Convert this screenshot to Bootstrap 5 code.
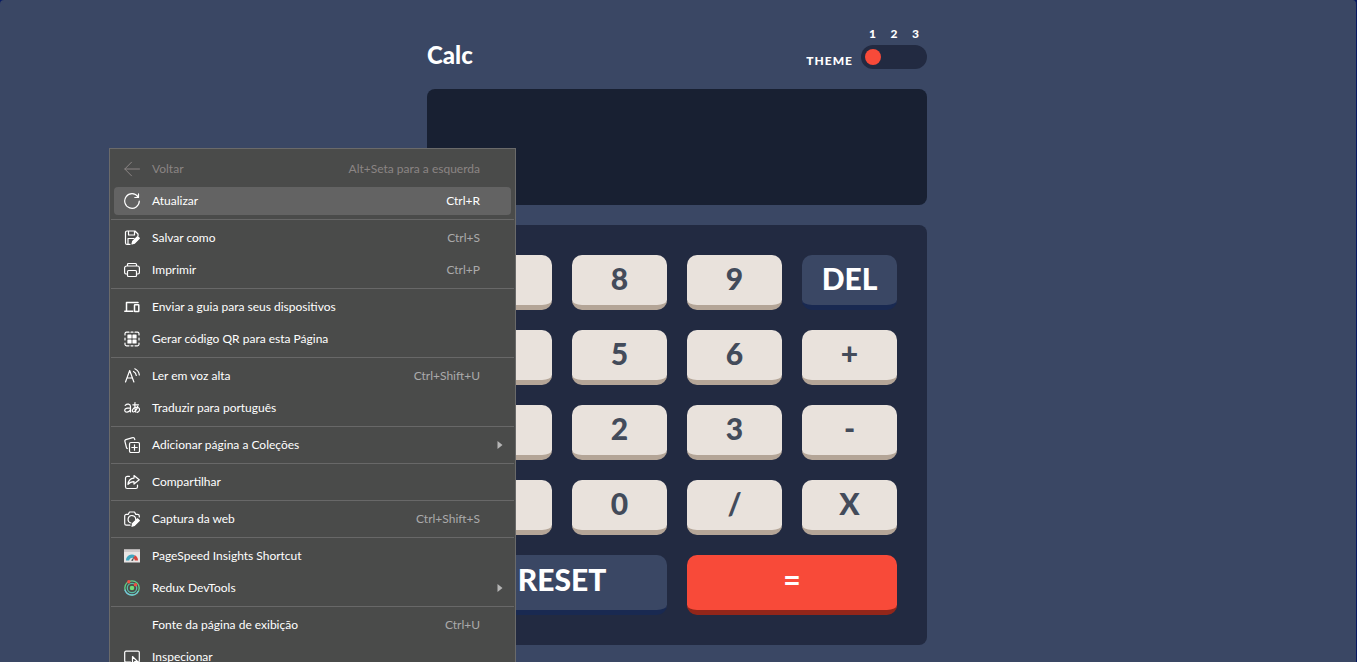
<!DOCTYPE html>
<html lang="pt-BR">
<head>
<meta charset="utf-8">
<meta name="viewport" content="width=device-width, initial-scale=1">
<title>Calc</title>
<link href="https://cdn.jsdelivr.net/npm/bootstrap@5.3.0/dist/css/bootstrap.min.css" rel="stylesheet">
<style>
  html { background: #071a63; }
  body { background: transparent; font-family: Lato, "Liberation Sans", sans-serif; }
  .page-shell { background: #3a4764; border-right: 1px solid #071a63; border-radius: 4px 4px 0 0; padding: 25px 2px 17px 0; }
  .calc-app { max-width: 500px; }
  .calc-title { font-size: 24px; line-height: 28px; font-weight: 900; color: #fff; }
  .theme-caption { font-size: 12px; line-height: 16px; font-weight: 900; letter-spacing: 1px; color: #fff; }
  .theme-numbers { font-size: 12px; line-height: 18px; font-weight: 900; color: #fff; margin-bottom: 2px; }
  .theme-slider { appearance: none; width: 66px; height: 24px; padding: 4px; border-radius: 12px; background: #222a41; display: block; margin: 0; }
  .theme-slider::-webkit-slider-runnable-track { height: 16px; background: transparent; }
  .theme-slider::-webkit-slider-thumb { appearance: none; width: 16px; height: 16px; border-radius: 50%; background: #f84a39; }
  .calc-screen { height: 116px; border: 0; border-radius: 8px; background: #182032; color: #fff; font-size: 36px; font-weight: 900; text-align: right; padding: 0 24px; margin-bottom: 20px; }
  .keypad { display: grid; grid-template-columns: repeat(4, 1fr); gap: 20px; padding: 30px; border-radius: 8px; background: #222a41; }
  .calc-key { height: 55px; border: 0; border-bottom: 5px solid #b4a597; border-radius: 10px; background: #e9e2dc; color: #434b5a; font-size: 30px; line-height: 46px; font-weight: 900; padding: 0 0 4px; }
  .key-wide { grid-column: span 2; height: 60px; padding-bottom: 8px; }
  .key-blue { background: #3a4764; border-color: #192951; color: #fff; }
  .key-red { background: #f84a39; border-color: #93261a; color: #fff; }

  .context-menu { left: 109px; top: 148px; width: 407px; padding: 4px 0; background: #4a4b4a; border: 1px solid #6a6a6a; color: #fff; font-family: Lato, sans-serif; font-size: 12px; }
  .menu-entry { display: flex; align-items: center; height: 28px; margin: 2px 4px; padding: 0 8px 0 10px; gap: 12px; border: 0; border-radius: 4px; background: transparent; color: inherit; line-height: 16px; text-align: left; }
  .menu-entry.is-current { background: #636363; }
  .menu-entry:disabled { color: #8b8584; }
  .menu-entry svg { width: 16px; height: 16px; flex: none; fill: none; stroke: currentColor; stroke-linecap: round; stroke-linejoin: round; }
  .shortcut { margin-left: auto; padding-right: 23px; color: #aaa; }
  .is-current .shortcut { color: #fff; }
  .menu-entry:disabled .shortcut { color: inherit; }
  .menu-entry .submenu-arrow { width: 6px; height: 8px; margin-left: auto; fill: #b5b5b5; stroke: none; }
  .menu-rule { height: 1px; margin: 2px 1px; background: #686868; }
  .icon-gap { width: 16px; flex: none; }
</style>
</head>
<body>
<div class="page-shell position-relative overflow-hidden min-vh-100">
  <main class="calc-app mx-auto">
    <header class="d-flex justify-content-between align-items-end mb-3 pb-1">
      <h1 class="calc-title mb-0">Calc</h1>
      <div class="d-flex align-items-end gap-2">
        <label class="theme-caption" for="theme">THEME</label>
        <div>
          <div class="theme-numbers d-flex justify-content-between px-2"><span>1</span><span>2</span><span>3</span></div>
          <input class="theme-slider" id="theme" type="range" min="1" max="3" value="1">
        </div>
      </div>
    </header>
    <input class="calc-screen d-block w-100" type="text" aria-label="Resultado" readonly>
    <section class="keypad" aria-label="Teclado">
      <button class="calc-key" type="button">7</button>
      <button class="calc-key" type="button">8</button>
      <button class="calc-key" type="button">9</button>
      <button class="calc-key key-blue" type="button">DEL</button>
      <button class="calc-key" type="button">4</button>
      <button class="calc-key" type="button">5</button>
      <button class="calc-key" type="button">6</button>
      <button class="calc-key" type="button">+</button>
      <button class="calc-key" type="button">1</button>
      <button class="calc-key" type="button">2</button>
      <button class="calc-key" type="button">3</button>
      <button class="calc-key" type="button">-</button>
      <button class="calc-key" type="button">.</button>
      <button class="calc-key" type="button">0</button>
      <button class="calc-key" type="button">/</button>
      <button class="calc-key" type="button">X</button>
      <button class="calc-key key-wide key-blue" type="button">RESET</button>
      <button class="calc-key key-wide key-red" type="button">=</button>
    </section>
  </main>

  <div class="context-menu position-absolute d-flex flex-column">
    <button class="menu-entry" type="button" disabled>
      <svg viewBox="0 0 16 16"><path d="M15.500 8H.8M7.500 1.200.8 8l6.700 6.800"/></svg>
      <span>Voltar</span><span class="shortcut">Alt+Seta para a esquerda</span>
    </button>
    <button class="menu-entry is-current" type="button">
      <svg viewBox="0 0 16 16" stroke-width="1.200"><path d="M14 3.800A7.300 7.300 0 1 0 15.300 8M14.500.8v3.700h-3.700"/></svg>
      <span>Atualizar</span><span class="shortcut">Ctrl+R</span>
    </button>
    <div class="menu-rule"></div>
    <button class="menu-entry" type="button">
      <svg viewBox="0 0 16 16" stroke-width="1.200"><path d="M6 14.400H3A1.500 1.500 0 0 1 1.500 13V2.500A1.500 1.500 0 0 1 3 1h8l3 3v2M4.500 1v4h6V1M4 14V8.500h6"/><path d="m8 14 .8-2.800L13.500 6.600l1.800 1.700-4.700 4.900z" fill="currentColor"/></svg>
      <span>Salvar como</span><span class="shortcut">Ctrl+S</span>
    </button>
    <button class="menu-entry" type="button">
      <svg viewBox="0 0 16 16" stroke-width="1.200"><path d="M3.500 12H2a1.400 1.400 0 0 1-1.400-1.400V6A2 2 0 0 1 2.600 4h10.800a2 2 0 0 1 2 2v4.600A1.400 1.400 0 0 1 14 12h-1.500M3.500 4V2.500A1 1 0 0 1 4.500 1.500h7a1 1 0 0 1 1 1V4"/><rect x="3.500" y="8.500" width="9" height="6" rx="1"/></svg>
      <span>Imprimir</span><span class="shortcut">Ctrl+P</span>
    </button>
    <div class="menu-rule"></div>
    <button class="menu-entry" type="button">
      <svg viewBox="0 0 16 16" stroke-width="1.500"><path d="M2.500 11.500V3.500h11.500M.8 12.300h8"/><rect x="10.500" y="5.700" width="4.300" height="6.800" rx=".5"/></svg>
      <span>Enviar a guia para seus dispositivos</span>
    </button>
    <button class="menu-entry" type="button">
      <svg viewBox="0 0 16 16" stroke-width="1.200"><path d="M1 4V2.500A1.500 1.500 0 0 1 2.500 1.200H5M7 1.200h2M11 1.200h2.500A1.500 1.500 0 0 1 15 2.500V4M15 12v1.500a1.500 1.500 0 0 1-1.500 1.300H11M9 14.800H7M5 14.800H2.500A1.500 1.500 0 0 1 1 13.500V12M1 7v2M15 7v2"/><path d="M4 4h3v3H4zM9 4h3v3H9zM4 9h3v3H4zM9 9h3v3H9z" fill="currentColor"/></svg>
      <span>Gerar código QR para esta Página</span>
    </button>
    <div class="menu-rule"></div>
    <button class="menu-entry" type="button">
      <svg viewBox="0 0 16 16" stroke-width="1.200"><path d="m1.500 14 4.200-11.500L9.900 14M3 10h5.500M9.500 3.500a5 5 0 0 1 2.800 4M10.800.8A7.500 7.500 0 0 1 15.300 7"/></svg>
      <span>Ler em voz alta</span><span class="shortcut">Ctrl+Shift+U</span>
    </button>
    <button class="menu-entry" type="button">
      <svg viewBox="0 0 16 16" stroke-width="1.200"><path d="M1.200 5.300C3 3.500 6.500 3.700 6.500 6.500V12M6.500 7.800C3 7.700.7 8.500.7 10.300c0 2.500 4.500 2.500 5.800-.8M8.800 4.800h5.700M11 2.500c-.4 3-.2 6 .8 9.700M13.700 6.300c-.6 3.200-3 5.900-4.500 5.700-1.900-.4-.6-4.200 2.700-4.600 2.900-.4 4.100 1.200 3.500 3-.3 1-1.100 1.600-2.200 2"/></svg>
      <span>Traduzir para português</span>
    </button>
    <div class="menu-rule"></div>
    <button class="menu-entry" type="button">
      <svg viewBox="0 0 16 16" stroke-width="1.200"><path d="M3.300 11.500 2.600 11 .9 4.400a1.500 1.500 0 0 1 1-1.800l6.700-1.900a1.500 1.500 0 0 1 1.900 1l.3 1"/><rect x="5.500" y="5.500" width="10" height="10" rx="1.500"/><path d="M10.500 7.800v5.400M7.800 10.500h5.400"/></svg>
      <span>Adicionar página a Coleções</span>
      <svg class="submenu-arrow" viewBox="0 0 6 8"><path d="M.5 0 5.500 4 .5 8z"/></svg>
    </button>
    <div class="menu-rule"></div>
    <button class="menu-entry" type="button">
      <svg viewBox="0 0 16 16" stroke-width="1.200"><path d="M5.500 2.300H3.300a1.800 1.800 0 0 0-1.800 1.800v8.600a1.800 1.800 0 0 0 1.800 1.800h8.400a1.800 1.800 0 0 0 1.800-1.800V11M10 1.500l5.200 4.300L10 10V7.600c-2.800 0-4.500.8-6 2.800.3-3.800 2.300-6 6-6.300z"/></svg>
      <span>Compartilhar</span>
    </button>
    <div class="menu-rule"></div>
    <button class="menu-entry" type="button">
      <svg viewBox="0 0 16 16" stroke-width="1.200"><path d="M6 14.200H2.300A1.600 1.600 0 0 1 .7 12.600V5a1.600 1.600 0 0 1 1.600-1.600h1.900L5.500 1h5l1.300 2.400h1.900A1.600 1.600 0 0 1 15.300 5v1M7 12a3.800 3.800 0 1 1 4.700-3.500"/><path d="m8 15.300.7-2.800 4.900-4.700 1.700 1.700-4.800 4.900z" fill="currentColor"/></svg>
      <span>Captura da web</span><span class="shortcut">Ctrl+Shift+S</span>
    </button>
    <div class="menu-rule"></div>
    <button class="menu-entry" type="button">
      <svg viewBox="0 0 16 16" stroke="none"><g stroke="none"><path d="M0 1.500h16v13H0z" fill="#e8e5e4"/><path d="M0 1.500h16v2.500H0z" fill="#cfcaca"/><path d="M2 12.500a6 6 0 0 1 9-5.200L9.300 10A3 3 0 0 0 5.200 12.500z" fill="#3fa6bf"/><path d="M11 7.300a6 6 0 0 1 3 5.200h-3.200A3 3 0 0 0 9.300 10z" fill="#d8443c"/><path d="m7 12.500 3.300-4L9 13z" fill="#555"/></g></svg>
      <span>PageSpeed Insights Shortcut</span>
    </button>
    <button class="menu-entry" type="button">
      <svg viewBox="0 0 16 16" stroke-width="1.300"><circle cx="8" cy="8" r="7.200" stroke="#61cf86"/><circle cx="8" cy="8" r="4.700" stroke="#55bda2"/><path d="M1 10a7.200 7.200 0 0 0 13 1.500" stroke="#75c5dc"/><g stroke="none"><circle cx="8" cy="8" r="2.300" fill="#70df76"/><circle cx="4.800" cy="1.800" r="1.700" fill="#ef5144"/><circle cx="11.500" cy="4.800" r="1.800" fill="#ef5144"/></g></svg>
      <span>Redux DevTools</span>
      <svg class="submenu-arrow" viewBox="0 0 6 8"><path d="M.5 0 5.500 4 .5 8z"/></svg>
    </button>
    <div class="menu-rule"></div>
    <button class="menu-entry" type="button">
      <span class="icon-gap"></span><span>Fonte da página de exibição</span><span class="shortcut">Ctrl+U</span>
    </button>
    <button class="menu-entry" type="button">
      <svg viewBox="0 0 16 16" stroke-width="1.200"><path d="M6.500 13H2a1.300 1.300 0 0 1-1.300-1.300V3.500A1.300 1.300 0 0 1 2 2.200h12a1.300 1.300 0 0 1 1.300 1.300v8.200A1.300 1.300 0 0 1 14 13"/><path d="m8.500 7.500 5 5H11l-2.500 2.300z"/></svg>
      <span>Inspecionar</span>
    </button>
  </div>
</div>
<script src="https://cdn.jsdelivr.net/npm/bootstrap@5.3.0/dist/js/bootstrap.bundle.min.js"></script>
</body>
</html>
